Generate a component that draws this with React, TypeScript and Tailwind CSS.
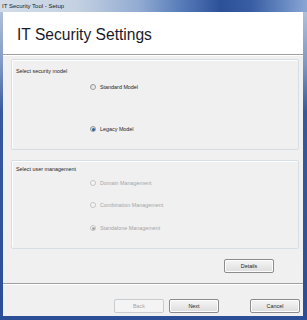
import React from "react";

function Radio({ checked, disabled }: { checked?: boolean; disabled?: boolean }) {
  return (
    <div
      className={
        "w-[6px] h-[6px] rounded-full border flex items-center justify-center " +
        (disabled ? "border-[#c4c4c4] bg-[#f4f4f4]" : "border-[#979898] bg-gradient-to-br from-[#d8d8d8] to-[#f8f8f8]")
      }
    >
      {checked && (
        <div className={"w-[3px] h-[3px] rounded-full " + (disabled ? "bg-[#a8a8a8]" : "bg-[#235f9e]")} />
      )}
    </div>
  );
}

function Option({ label, checked, disabled, className }: { label: string; checked?: boolean; disabled?: boolean; className?: string }) {
  return (
    <div className={"flex items-center h-[8px] pl-[78px] gap-[4px] " + (className ?? "")}>
      <Radio checked={checked} disabled={disabled} />
      <span className={"text-[5.4px] leading-[8px] " + (disabled ? "text-[#a6a6a6]" : "text-[#262626]")}>{label}</span>
    </div>
  );
}

function Btn({ label, disabled, className }: { label: string; disabled?: boolean; className?: string }) {
  return (
    <div
      className={
        "w-[50px] h-[14px] rounded-[2px] border flex items-center justify-center text-[5.4px] " +
        (disabled
          ? "border-[#c9ccce] bg-[#f4f4f4] text-[#a6a6a6]"
          : "border-[#8c8c8c] bg-gradient-to-b from-[#f5f5f5] to-[#dedede] text-[#262626] shadow-[inset_0_0_0_1px_#fcfcfc]") +
        " " +
        (className ?? "")
      }
    >
      {label}
    </div>
  );
}

export default function App() {
  return (
    <div className="w-[307px] h-[320px] flex flex-col font-['Liberation_Sans',Arial,sans-serif] bg-[linear-gradient(to_bottom,#b9c9df_0%,#7f98c4_20%,#36599e_35%,#2c4e96_100%)]">
      <div className="h-[12px] flex items-center pl-[2px] bg-[linear-gradient(to_right,#d3dce8_0%,#c4d1e2_25%,#93acd2_45%,#5b7fbb_58%,#2d5199_72%,#3a5ea3_82%,#6486c0_92%,#8aa6d4_100%)]">
        <span className="text-[6px] leading-[8px] text-[#1a1a1a]">IT Security Tool - Setup</span>
      </div>
      <div className="flex-1 flex pl-[3px] pr-[4px] pb-[4px]">
        <div className="flex-1 flex flex-col bg-[#f0f0f0]">
          <div className="h-[42px] bg-white flex items-center pl-[14px] pt-[4px]">
            <span className="text-[15.6px] leading-[18px] text-[#1a1a2a]">IT Security Settings</span>
          </div>
          <div className="h-[1px] bg-[#a0a0a0]" />
          <div className="h-[1px] bg-white" />
          <div className="flex-1 flex flex-col pl-[8px] pr-[4px] pt-[3px]">
            <div className="h-[91px] border border-[#d5dfe5] rounded-[2px] shadow-[inset_1px_1px_0_#ffffff] flex flex-col pt-[7px]">
              <span className="text-[5.4px] leading-[8px] text-[#262626] pl-[4px]">Select security model</span>
              <Option label="Standard Model" className="mt-[8px]" />
              <Option label="Legacy Model" checked className="mt-[34px]" />
            </div>
            <div className="h-[89px] mt-[10px] border border-[#d5dfe5] rounded-[2px] shadow-[inset_1px_1px_0_#ffffff] flex flex-col pt-[4px]">
              <span className="text-[5.4px] leading-[8px] text-[#262626] pl-[4px]">Select user management</span>
              <Option label="Domain Management" disabled className="mt-[6px]" />
              <Option label="Combination Management" disabled className="mt-[14px]" />
              <Option label="Standalone Management" checked disabled className="mt-[15px]" />
            </div>
            <div className="flex justify-end pr-[25px] mt-[10px]">
              <Btn label="Details" />
            </div>
          </div>
          <div className="h-[1px] bg-[#a0a0a0] mt-[10px]" />
          <div className="h-[1px] bg-white" />
          <div className="flex items-center pl-[111px] pt-[14px] pb-[3px]">
            <Btn label="Back" disabled />
            <Btn label="Next" className="ml-[5px]" />
            <Btn label="Cancel" className="ml-[31px]" />
          </div>
        </div>
      </div>
    </div>
  );
}
